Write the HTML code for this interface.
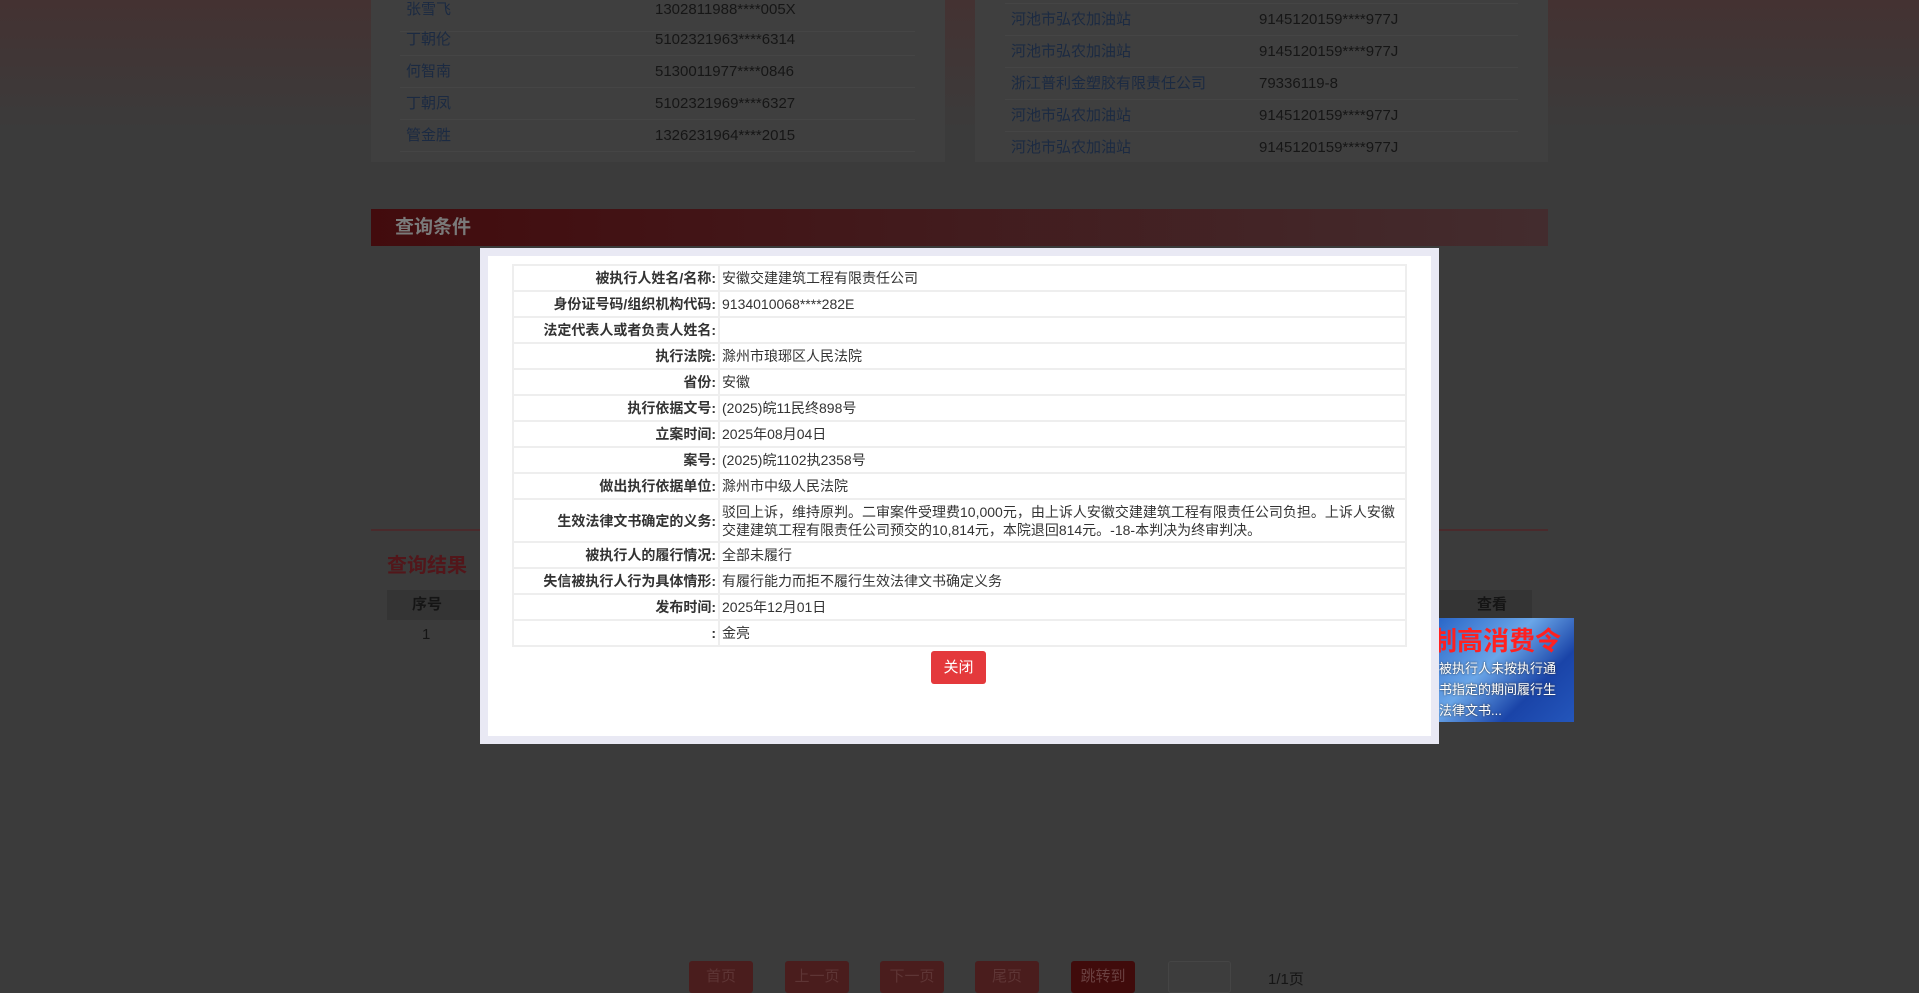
<!DOCTYPE html>
<html><head><meta charset="utf-8"><style>
*{margin:0;padding:0;box-sizing:border-box}
body{width:1919px;height:992px;overflow:hidden;background:#3b3b3b;font-family:"Liberation Sans","Noto Sans CJK SC",sans-serif;position:relative}
.topgrad{position:absolute;left:0;top:0;width:1919px;height:130px;background:linear-gradient(#443232,#3b3b3b)}
.panel{position:absolute;top:0;height:162px;background:#3f3f3f;}
.row{position:absolute;height:32px;border-bottom:1px solid #454545;font-size:15px;color:#1b2a42;line-height:20px}
.row span{position:absolute;top:0}
.row .id{color:#161616}
.abs{position:absolute}
.bar{left:371px;top:209px;width:1177px;height:37px;background:linear-gradient(90deg,#420b0d,#432c2e);color:#7a7a7a;font-weight:bold;font-size:19px;line-height:37px;padding-left:24px}
.modal{left:480px;top:248px;width:959px;height:496px;background:#e9e9f4;padding:8px}
.inner{background:#fff;width:100%;height:100%;position:relative}
table{position:absolute;left:24px;top:8px;width:895px;border-collapse:collapse;font-size:14px;color:#333}
td{border:2px solid #eee;height:26px;line-height:18px;padding:1px 2px}
td.l{width:206px;text-align:right;font-weight:bold;padding-right:2px}
.btn{left:931px;top:651px;width:55px;height:33px;background:#e4393c;color:#fff;border-radius:3px;font-size:15px;text-align:center;line-height:33px}
.pg{position:absolute;top:961px;width:64px;height:32px;background:#4a1d1d;color:#5e3535;border-radius:3px;font-size:15px;text-align:center;line-height:32px}
</style></head><body>
<div class="topgrad"></div>
<div class="panel" style="left:371px;width:574px"></div>
<div class="panel" style="left:975px;width:573px"></div>
<div class="row" style="left:400px;top:0;width:515px"><span style="left:6px">张雪飞</span><span class="id" style="left:255px">1302811988****005X</span></div>
<div class="row" style="left:400px;top:24px;width:515px"><span style="left:6px;top:6px">丁朝伦</span><span class="id" style="left:255px;top:6px">5102321963****6314</span></div>
<div class="row" style="left:400px;top:56px;width:515px"><span style="left:6px;top:6px">何智南</span><span class="id" style="left:255px;top:6px">5130011977****0846</span></div>
<div class="row" style="left:400px;top:88px;width:515px"><span style="left:6px;top:6px">丁朝凤</span><span class="id" style="left:255px;top:6px">5102321969****6327</span></div>
<div class="row" style="left:400px;top:120px;width:515px"><span style="left:6px;top:6px">管金胜</span><span class="id" style="left:255px;top:6px">1326231964****2015</span></div>
<div class="row" style="left:1005px;top:-28px;width:513px"></div>
<div class="row" style="left:1005px;top:4px;width:513px"><span style="left:6px;top:6px">河池市弘农加油站</span><span class="id" style="left:254px;top:6px">9145120159****977J</span></div>
<div class="row" style="left:1005px;top:36px;width:513px"><span style="left:6px;top:6px">河池市弘农加油站</span><span class="id" style="left:254px;top:6px">9145120159****977J</span></div>
<div class="row" style="left:1005px;top:68px;width:513px"><span style="left:6px;top:6px">浙江普利金塑胶有限责任公司</span><span class="id" style="left:254px;top:6px">79336119-8</span></div>
<div class="row" style="left:1005px;top:100px;width:513px"><span style="left:6px;top:6px">河池市弘农加油站</span><span class="id" style="left:254px;top:6px">9145120159****977J</span></div>
<div class="row" style="left:1005px;top:132px;width:513px;border:0"><span style="left:6px;top:6px">河池市弘农加油站</span><span class="id" style="left:254px;top:6px">9145120159****977J</span></div>
<div class="abs bar">查询条件</div>
<div class="abs" style="left:371px;top:529px;width:1177px;height:2px;background:#4a2a2c"></div>
<div class="abs" style="left:387px;top:549px;font-size:20px;font-weight:bold;color:#52161a">查询结果</div>
<div class="abs" style="left:387px;top:590px;width:1145px;height:30px;background:#343434;font-size:15px;font-weight:bold;color:#151515;line-height:30px"><span style="position:absolute;left:25px">序号</span><span style="position:absolute;left:1090px">查看</span></div>
<div class="abs" style="left:422px;top:626px;font-size:15px;color:#151515">1</div>
<div class="abs" style="left:1439px;top:618px;width:135px;height:104px;background:linear-gradient(135deg,#2a66c8,#6aa6e8 40%,#1a44a8 70%,#2456bb);overflow:hidden">
<div style="color:#ff2020;font-size:26px;font-weight:bold;margin:3px 0 0 -8px;white-space:nowrap">制高消费令</div>
<div style="color:#fff;font-size:13px;line-height:21px;white-space:nowrap;text-shadow:0 0 2px #333">被执行人未按执行通<br>书指定的期间履行生<br>法律文书...</div></div>
<div class="abs modal"><div class="inner">
<table>
<tr><td class="l">被执行人姓名/名称:</td><td>安徽交建建筑工程有限责任公司</td></tr>
<tr><td class="l">身份证号码/组织机构代码:</td><td>9134010068****282E</td></tr>
<tr><td class="l">法定代表人或者负责人姓名:</td><td></td></tr>
<tr><td class="l">执行法院:</td><td>滁州市琅琊区人民法院</td></tr>
<tr><td class="l">省份:</td><td>安徽</td></tr>
<tr><td class="l">执行依据文号:</td><td>(2025)皖11民终898号</td></tr>
<tr><td class="l">立案时间:</td><td>2025年08月04日</td></tr>
<tr><td class="l">案号:</td><td>(2025)皖1102执2358号</td></tr>
<tr><td class="l">做出执行依据单位:</td><td>滁州市中级人民法院</td></tr>
<tr><td class="l" style="height:43px">生效法律文书确定的义务:</td><td>驳回上诉，维持原判。二审案件受理费10,000元，由上诉人安徽交建建筑工程有限责任公司负担。上诉人安徽交建建筑工程有限责任公司预交的10,814元，本院退回814元。-18-本判决为终审判决。</td></tr>
<tr><td class="l">被执行人的履行情况:</td><td>全部未履行</td></tr>
<tr><td class="l">失信被执行人行为具体情形:</td><td>有履行能力而拒不履行生效法律文书确定义务</td></tr>
<tr><td class="l">发布时间:</td><td>2025年12月01日</td></tr>
<tr><td class="l">:</td><td>金亮</td></tr>
</table></div></div>
<div class="abs btn">关闭</div>
<div class="pg" style="left:689px">首页</div>
<div class="pg" style="left:785px">上一页</div>
<div class="pg" style="left:880px">下一页</div>
<div class="pg" style="left:975px">尾页</div>
<div class="pg" style="left:1071px;background:#400b0b;color:#6a4040">跳转到</div>
<div class="abs" style="left:1168px;top:961px;width:63px;height:32px;background:#3d3d3d;border:1px solid #454545;border-radius:3px"></div>
<div class="abs" style="left:1268px;top:968px;font-size:15px;color:#151515">1/1页</div>
</body></html>
